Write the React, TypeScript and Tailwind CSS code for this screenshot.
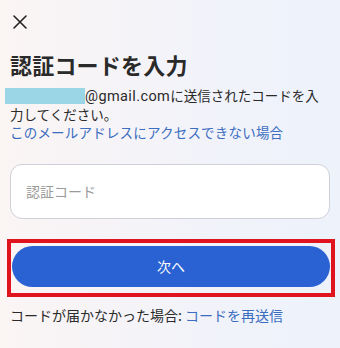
import React from 'react';

const jp = { fontFamily: '"Noto Sans CJK JP", "Noto Sans", sans-serif' };

const App: React.FC = () => {
  return (
    <div
      className="w-[340px] h-[348px] overflow-hidden bg-gradient-to-r from-[#fbf5f4] via-[#f3f3f9] to-[#edf2fb] px-[10px] pt-[15px] text-[#222]"
      style={jp}
    >
      <svg width="14" height="14" viewBox="0 0 14 14" className="ml-[3px] block">
        <path d="M1 1 13 13M13 1 1 13" stroke="#222" strokeWidth="1.6" strokeLinecap="round" />
      </svg>

      <h1 className="mt-[20px] text-[22px] leading-[30px] font-bold tracking-[0.2px] text-[#2a2a2a]">
        認証コードを入力
      </h1>

      <div className="mt-[8px] text-[13.5px] leading-[17.5px] text-[#2a2a2a]">
        <p>
          <span className="ml-[-5px] inline-block h-[16px] w-[80px] bg-[#9bd6e7] align-[-3px]" />
          <span className="text-[14.5px] tracking-[0.4px]" style={{ fontFamily: 'Roboto, "Noto Sans", sans-serif' }}>
            @gmail.com
          </span>
          に送信されたコードを入
          <br />
          力してください。
        </p>
        <p className="text-[13.5px] leading-[18px] tracking-[0.2px] text-[#3a6cc0]">
          このメールアドレスにアクセスできない場合
        </p>
      </div>

      <div className="mt-[23px] flex h-[55px] items-center rounded-[12px] border border-[#cfd0d8] bg-white px-[15px]">
        <span className="text-[14px] text-[#9a9a9a]">認証コード</span>
      </div>

      <div className="mt-[20px] ml-[-3px] w-[328px] border-[4px] border-[#e0141e] pl-[1px] pr-[1px] pt-[3px] pb-[6px]">
        <div className="flex h-[41px] items-center justify-center rounded-full bg-[#2a62d3] text-[14px] text-white">
          次へ
        </div>
      </div>

      <p className="mt-[8px] text-[14px] leading-[20px] text-[#2a2a2a]">
        コードが届かなかった場合: <span className="text-[#3a6cc0]">コードを再送信</span>
      </p>
    </div>
  );
};

export default App;
